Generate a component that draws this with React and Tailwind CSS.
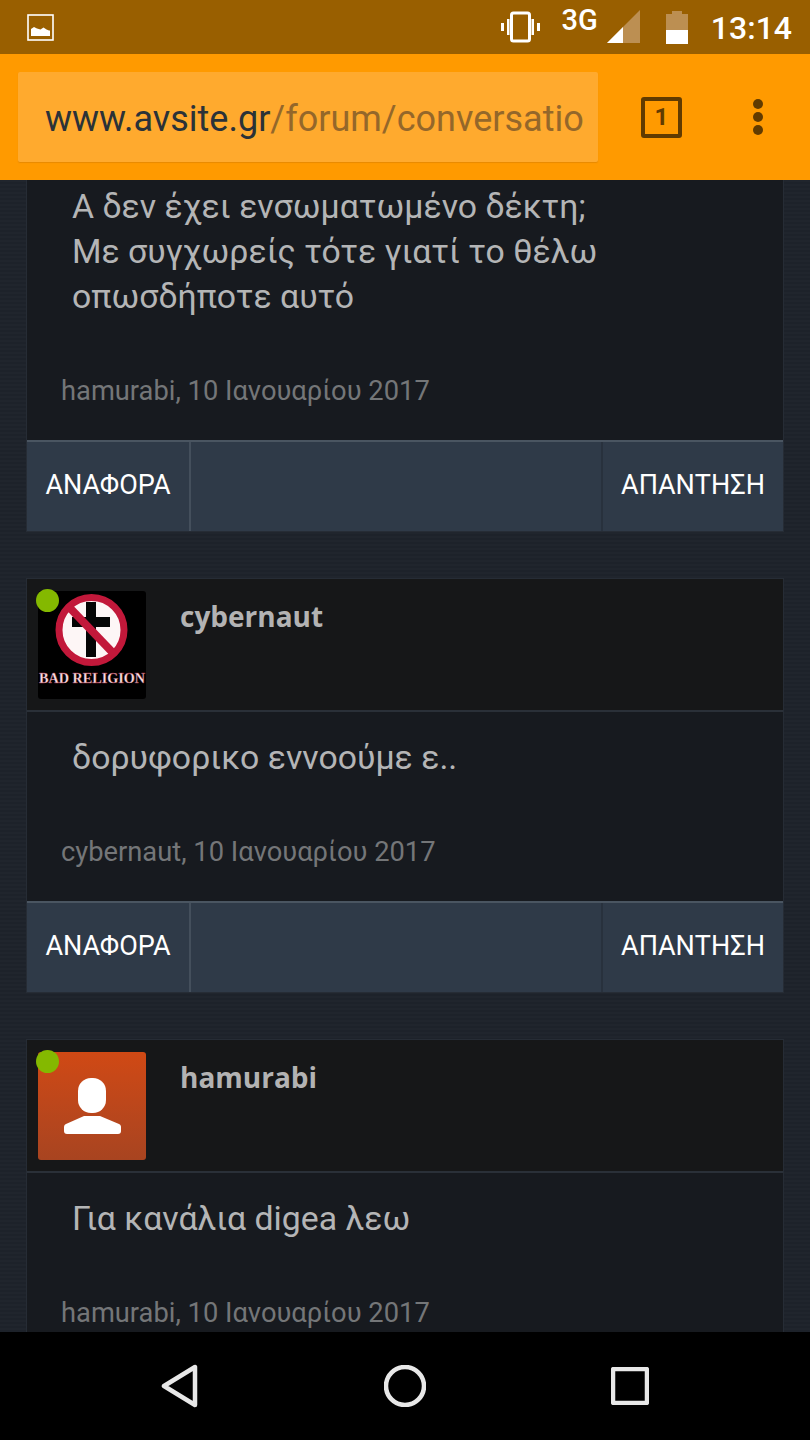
import React from 'react';

function StatusBar() {
  return (
    <div className="h-[54px] bg-[#995f00] flex items-center relative shrink-0">
      {/* picture notification */}
      <svg width="27" height="27" viewBox="0 0 27 27" className="ml-[27px]">
        <rect x="1" y="1" width="25" height="25" fill="none" stroke="#fff" strokeWidth="1.6" />
        <path d="M4 22V15l3-2 3 1.5 3.5 1 3-2 3 2 2.5 1 1 0V22z" fill="#fff" />
      </svg>
      <div className="ml-auto flex items-center pr-[18px]">
        <svg width="41" height="32" viewBox="0 0 41 32" className="mr-[21px] mt-[-1px]">
          <rect x="11.5" y="2" width="18" height="28" rx="2" fill="none" stroke="#fff" strokeWidth="3" />
          <path d="M7 8h2.5v16H7zM31.5 8H34v16h-2.5zM1 12h3v8H1zM37 12h3v8h-3z" fill="#fff" />
        </svg>
        <span className="font-['Roboto',sans-serif] font-medium text-[29px] leading-none text-white mt-[-14px] mr-[8px]">3G</span>
        <svg width="35" height="34" viewBox="0 0 35 34" className="mr-[25px] mt-[-1px]">
          <path d="M34 0v33H1z" fill="#bc8f52" />
          <path d="M17 17v16H1z" fill="#fff" />
        </svg>
        <div className="w-[22px] h-[33px] mr-[23px] flex flex-col">
          <div className="w-[10px] h-[3px] bg-[#bc8f52] mx-auto" />
          <div className="h-[16px] bg-[#bc8f52]" />
          <div className="h-[14px] bg-white" />
        </div>
        <span className="font-['Roboto',sans-serif] font-medium text-[32px] leading-none text-white mt-[2px]">13:14</span>
      </div>
    </div>
  );
}

function Toolbar() {
  return (
    <div className="h-[126px] bg-[#ff9a00] flex items-center shrink-0 relative">
      <div className="ml-[18px] w-[580px] h-[90px] bg-[#ffaa2e] rounded-[2px] shadow-[0_1px_1px_rgba(160,90,0,0.25)] flex items-center pl-[27px] overflow-hidden">
        <span className="font-['Roboto',sans-serif] text-[36px] leading-[44px] pt-[4px] whitespace-nowrap text-[#2b3238]">
          www.avsite.gr<span className="text-[#94672a]">/forum/conversatio</span>
        </span>
      </div>
      <div className="ml-[43px] w-[41px] h-[41px] border-[4px] border-[#613b00] rounded-[3px] flex items-center justify-center">
        <span className="font-['Roboto',sans-serif] font-bold text-[24px] leading-none text-[#613b00]">1</span>
      </div>
      <div className="ml-[71px] flex flex-col gap-[3px]">
        <div className="w-[10px] h-[10px] rounded-full bg-[#613b00]" />
        <div className="w-[10px] h-[10px] rounded-full bg-[#613b00]" />
        <div className="w-[10px] h-[10px] rounded-full bg-[#613b00]" />
      </div>
    </div>
  );
}

function BadReligionAvatar() {
  return (
    <svg width="108" height="108" viewBox="0 0 108 108" className="rounded-[3px]">
      <rect width="108" height="108" fill="#000" />
      <circle cx="53.5" cy="39" r="32.5" fill="#fdf6f6" stroke="#c2183a" strokeWidth="7" />
      <path d="M48 11h10v15h14v10H58v30H48V36H34V26h14z" fill="#050505" />
      <path d="M31 16l45 47" stroke="#c2183a" strokeWidth="8" />
      <text x="54" y="92" textAnchor="middle" fill="#f5dfe2" stroke="#9c2a3c" strokeWidth="0.3" fontFamily="'Liberation Serif', serif" fontWeight="700" fontSize="15.5" textLength="106" lengthAdjust="spacingAndGlyphs">BAD RELIGION</text>
    </svg>
  );
}

function DefaultAvatar() {
  return (
    <svg width="108" height="108" viewBox="0 0 108 108" className="rounded-[3px] bg-gradient-to-b from-[#d04914] to-[#a84420]">
      <rect x="40" y="26" width="28" height="35" rx="13" fill="#fff" />
      <path d="M46 64h16l19 8c2 1 2 2 2 4v3c0 2-1 3-3 3H29c-2 0-3-1-3-3v-3c0-2 0-3 2-4z" fill="#fff" />
    </svg>
  );
}

function PostHeader({ name, avatar }) {
  return (
    <div className="h-[133px] bg-[#161718] border-b-2 border-[#2a3038] flex shrink-0 relative">
      <div className="ml-[11px] mt-[12px]">{avatar}</div>
      <div className="absolute left-[9px] top-[10px] w-[23px] h-[23px] rounded-full bg-[#84b900]" />
      <div className="ml-[34px] mt-[19px] font-['Open_Sans',sans-serif] font-bold text-[28px] leading-[36px] text-[#b3b3b3]">{name}</div>
    </div>
  );
}

function PostFooter() {
  return (
    <div className="h-[91px] flex bg-[#2f3a48] border-t-2 border-[#4a5561] font-['Roboto',sans-serif] text-[27px] text-white shrink-0">
      <div className="w-[164px] border-r-2 border-[#444f5c] flex items-center justify-center pb-[2px]">ΑΝΑΦΟΡΑ</div>
      <div className="flex-1" />
      <div className="w-[182px] border-l-2 border-[#28313d] flex items-center justify-center pb-[2px]">ΑΠΑΝΤΗΣΗ</div>
    </div>
  );
}

function PostBody({ lines, author, date, first }) {
  return (
    <div className={first ? 'h-[260px] bg-[#171a1f] pt-[4px] shrink-0' : 'h-[189px] bg-[#171a1f] pt-[23px] shrink-0'}>
      <div className="pl-[45px] font-['Roboto',sans-serif] text-[33.8px] leading-[45px] text-[#b4b5b6]">
        {lines.map((l) => <div key={l}>{l}</div>)}
      </div>
      <div className="pl-[34px] mt-[54px] font-['Roboto',sans-serif] text-[27.3px] leading-[36px] text-[#747678]">
        {author}, {date}
      </div>
    </div>
  );
}

function NavBar() {
  return (
    <div className="h-[108px] bg-black flex items-center shrink-0">
      <svg width="38" height="44" viewBox="0 0 38 44" className="ml-[161px]">
        <path d="M34 3v38L3 22z" fill="none" stroke="#e8e8e8" strokeWidth="4.5" strokeLinejoin="round" />
      </svg>
      <svg width="42" height="42" viewBox="0 0 42 42" className="ml-[185px]">
        <circle cx="21" cy="21" r="19" fill="none" stroke="#e8e8e8" strokeWidth="4.5" />
      </svg>
      <svg width="38" height="38" viewBox="0 0 38 38" className="ml-[185px]">
        <rect x="2" y="2" width="34" height="34" rx="1" fill="none" stroke="#e8e8e8" strokeWidth="4.5" />
      </svg>
    </div>
  );
}

export default function App() {
  return (
    <div className="w-[810px] h-[1440px] flex flex-col overflow-hidden bg-black">
      <StatusBar />
      <Toolbar />
      <div className="h-[1152px] overflow-hidden pl-[26px] bg-[repeating-linear-gradient(0deg,#1d222a_0px,#1d222a_2px,#20252d_2px,#20252d_4px)] shrink-0">
        <div className="w-[758px] flex flex-col">
          <div className="flex flex-col border-x border-b border-[#262c35]">
            <PostBody first lines={['Α δεν έχει ενσωματωμένο δέκτη;', 'Με συγχωρείς τότε γιατί το θέλω', 'οπωσδήποτε αυτό']} author="hamurabi" date="10 Ιανουαρίου 2017" />
            <PostFooter />
          </div>
          <div className="h-[46px] shrink-0" />
          <div className="flex flex-col border border-[#262c35]">
            <PostHeader name="cybernaut" avatar={<BadReligionAvatar />} />
            <PostBody lines={['δορυφορικο εννοούμε ε..']} author="cybernaut" date="10 Ιανουαρίου 2017" />
            <PostFooter />
          </div>
          <div className="h-[46px] shrink-0" />
          <div className="flex flex-col border border-[#262c35]">
            <PostHeader name="hamurabi" avatar={<DefaultAvatar />} />
            <PostBody lines={['Για κανάλια digea λεω']} author="hamurabi" date="10 Ιανουαρίου 2017" />
          </div>
        </div>
      </div>
      <NavBar />
    </div>
  );
}
